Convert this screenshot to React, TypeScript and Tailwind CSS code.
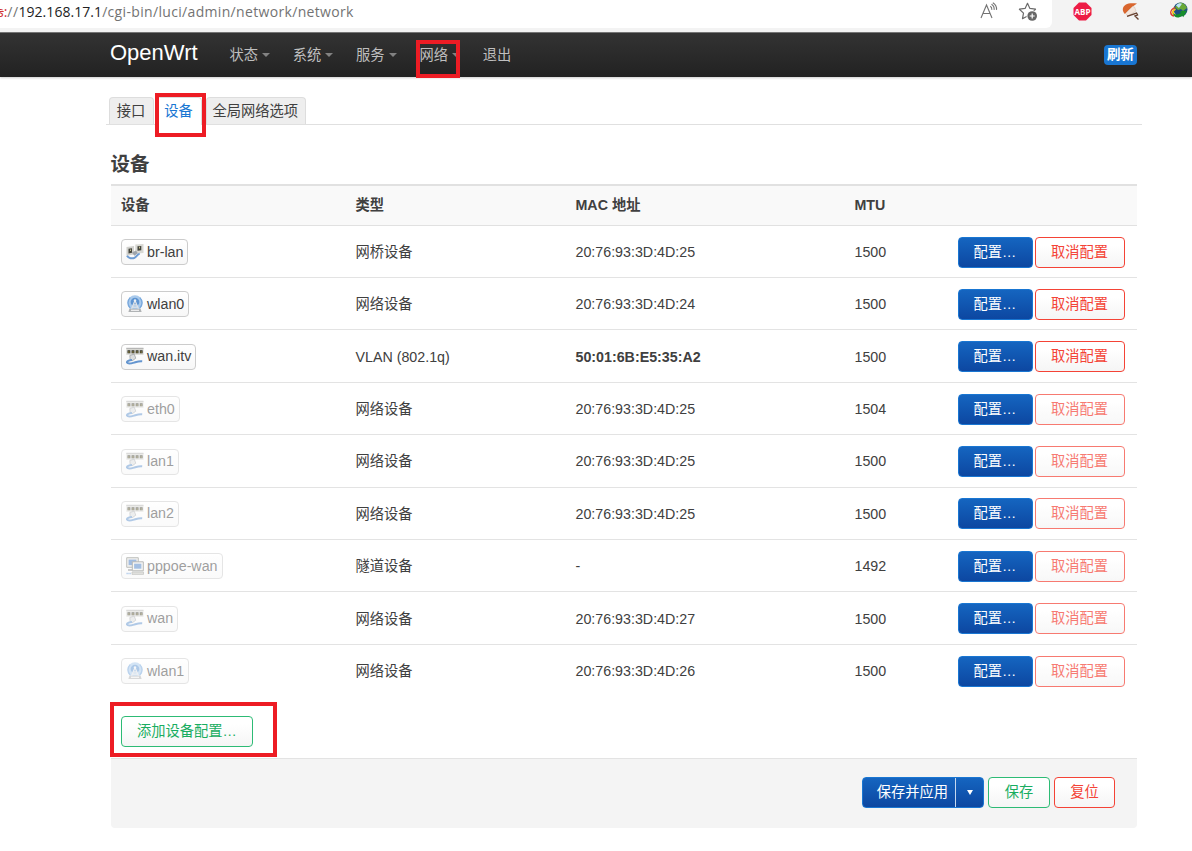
import clsx from "clsx";

type IconKind = "bridge" | "wifi" | "ethernet" | "tunnel";

type Device = {
  name: string;
  icon: IconKind;
  type: string;
  mac: string;
  mtu: number;
  active?: boolean;
  customMac?: boolean;
};

const devices: Device[] = [
  { name: "br-lan", icon: "bridge", type: "网桥设备", mac: "20:76:93:3D:4D:25", mtu: 1500, active: true },
  { name: "wlan0", icon: "wifi", type: "网络设备", mac: "20:76:93:3D:4D:24", mtu: 1500, active: true },
  { name: "wan.itv", icon: "ethernet", type: "VLAN (802.1q)", mac: "50:01:6B:E5:35:A2", mtu: 1500, active: true, customMac: true },
  { name: "eth0", icon: "ethernet", type: "网络设备", mac: "20:76:93:3D:4D:25", mtu: 1504 },
  { name: "lan1", icon: "ethernet", type: "网络设备", mac: "20:76:93:3D:4D:25", mtu: 1500 },
  { name: "lan2", icon: "ethernet", type: "网络设备", mac: "20:76:93:3D:4D:25", mtu: 1500 },
  { name: "pppoe-wan", icon: "tunnel", type: "隧道设备", mac: "-", mtu: 1492 },
  { name: "wan", icon: "ethernet", type: "网络设备", mac: "20:76:93:3D:4D:27", mtu: 1500 },
  { name: "wlan1", icon: "wifi", type: "网络设备", mac: "20:76:93:3D:4D:26", mtu: 1500 },
];

const menu = [
  { label: "状态", caret: true },
  { label: "系统", caret: true },
  { label: "服务", caret: true },
  { label: "网络", caret: true, marked: true },
  { label: "退出", caret: false },
];

const columns = "grid grid-cols-[234.5px_220px_279px_103px_1fr] pl-[10.5px]";

function Marker({ className }: { className: string }) {
  return <span className={clsx("pointer-events-none absolute z-10 border-4 border-[#ed1c24]", className)} />;
}

function DeviceIcon({ kind }: { kind: IconKind }) {
  if (kind === "bridge") {
    return (
      <svg className="size-[18px] shrink-0" viewBox="0 0 18 18">
        <path d="M.5 4 8 3v8.4L.5 12.8z" fill="#d0d0cc" />
        <path d="M9.3 1.6 17.5 1v9l-8.2.8z" fill="#d8d8d3" />
        <path d="M2.5 5.8 6 5.2v4.6l-3.5.6zM11.5 3.2l3.8-.3v4.4l-3.8.4z" fill="#45463d" />
        <path d="M4 6.5h1v1.6H4zM13 3.8h1v1.8h-1z" fill="#c5bd90" />
        <path d="M6 9.5 10 7.4l1.8 2.8-3.4 2.6z" fill="#9ea4aa" />
        <path d="M1 12.8c1.5 2.6 5.3 3.1 7.5 2 2.5-1.3 2.2-3.2 5.2-4.2" fill="none" stroke="#6d9cd4" strokeWidth="2" />
      </svg>
    );
  }
  if (kind === "wifi") {
    return (
      <svg className="size-[18px] shrink-0" viewBox="0 0 18 18">
        <circle cx="9" cy="7.8" r="7.6" fill="#a9caec" />
        <path d="M4.2 2.6a7.2 7.2 0 0 0 0 10.4M13.8 2.6a7.2 7.2 0 0 1 0 10.4" fill="none" stroke="#79a8dc" strokeWidth="1.3" />
        <circle cx="9" cy="7" r="4.3" fill="#5f95d2" />
        <path d="M9 5.5 5.5 14M9 5.5l3.5 8.5M7.2 10h3.6M6.3 12.2h5.4" fill="none" stroke="#dfe3e8" strokeWidth="1.3" />
        <circle cx="9" cy="5.5" r="1.2" fill="#eef2f5" />
        <path d="M3.4 13.7h11.2l1 3.3H2.4z" fill="#b0b3b5" />
        <path d="M5 15.3h8" stroke="#f3f3f3" strokeWidth="1.2" />
      </svg>
    );
  }
  if (kind === "tunnel") {
    return (
      <svg className="size-[18px] shrink-0" viewBox="0 0 18 18">
        <path d="M.7.7h11.6v9.6H.7z" fill="#e3e3df" stroke="#81847f" />
        <path d="M2.6 2.6h7.8v5.5H2.6z" fill="#467bc2" />
        <path d="M2 12h4v2H2z" fill="#999" />
        <path d="M6.3 4.8h11v9h-11z" fill="#eeeeeb" stroke="#70736f" />
        <path d="M8.1 6.7h7.3v5H8.1z" fill="#4b81c7" />
        <path d="M6 15h11.5v2.4H6z" fill="#c7c7c2" stroke="#858782" strokeWidth=".7" />
        <path d="M.5 16.5H5" stroke="#5790d4" strokeWidth="1.5" strokeDasharray="1.2 .7" />
      </svg>
    );
  }
  return (
    <svg className="size-[18px] shrink-0" viewBox="0 0 18 18">
      <path d="M.3 1.3h17.2v6.5H.3z" fill="#d8d8d3" />
      <path d="M.3 1.3h17.2" stroke="#aaa" />
      <path d="M1.5 3.3h2.8v3H1.5zM5.6 3.3h2.8v3H5.6zM9.7 3.3h2.8v3H9.7zM13.8 3.3h2.8v3h-2.8z" fill="#35362d" />
      <path d="M2.3 5h1.2M6.4 5h1.2M10.5 5h1.2M14.6 5h1.2" stroke="#c5b350" />
      <path d="m3.8 8.5 4.4-1.4 1.6 4.1-3.7 2.7-2-2z" fill="#dcdedf" stroke="#969b9f" strokeWidth=".7" />
      <path d="M6 13c-3 .2-5.4 1.5-5 2.6.8 1.4 4.5.7 7 0s4.5-1.6 8.2-1.3" fill="none" stroke="#6495cf" strokeWidth="2" />
    </svg>
  );
}

const buttonBase = "h-[31px] rounded border text-center leading-[29px] whitespace-nowrap";
const primary = "border-[#1976d2] bg-linear-to-b from-[#1565c0] to-[#0d47a1] text-white";
const outline = "bg-linear-to-b from-white from-25% to-[#f5f5f5]";

function BrowserBar() {
  return (
    <div className="flex h-[33px] border-b border-[#777] bg-[#f3f3f3] font-['Open_Sans',sans-serif]">
      <div className="flex h-7 w-[1052px] items-start justify-between overflow-hidden rounded-br-md bg-white pr-[14px]">
        <div className="flex text-[14px] leading-[23px] whitespace-nowrap text-[#737373]">
          <span className="-ml-[3px] text-[#d13438] line-through">s</span>
          <span className="text-[#d13438]">:</span>
          <span className="tracking-[0.4px]">//</span>
          <span className="tracking-[0.05px] text-[#222]">192.168.17.1</span>
          <span className="tracking-[0.33px]">/cgi-bin/luci/admin/network/network</span>
        </div>
        <div className="flex gap-[19px] pt-[2px]">
          <svg className="h-5 w-[19px]" viewBox="0 0 19 20" fill="none" stroke="#737373" strokeWidth="1.1">
            <path d="m1 16 5.5-13L12 16M3 11.5h7M10.3 4.2c1.2.8 1.7 2.2 1.5 3.7M11.5 2.3c2 1.2 2.9 3.3 2.6 5.6M12.8.8c2.7 1.6 4 4.1 3.7 7.1" />
          </svg>
          <svg className="size-5" viewBox="0 0 20 20">
            <path d="m9.5 1.3 2.4 5.1 5.6.8-4 3.9 1 5.4-5-2.6-5 2.8 1-5.6-4.1-3.9 5.7-.8z" fill="white" stroke="#6b6b6b" strokeWidth="1.2" strokeLinejoin="round" />
            <circle cx="14.2" cy="14" r="5.7" fill="white" />
            <circle cx="14.2" cy="14" r="4.8" fill="#666" />
            <path d="M14.2 11.5v5M11.7 14h5" stroke="white" strokeWidth="1.2" />
          </svg>
        </div>
      </div>
      <div className="flex gap-[30px] pt-[2px] pl-[21px]">
        <svg className="size-[19px]" viewBox="0 0 19 19">
          <path d="M6 .5h7L18.5 6v7L13 18.5H6L.5 13V6z" fill="#ed1c45" />
          <text x="9.5" y="12.8" textAnchor="middle" textLength="16" lengthAdjust="spacingAndGlyphs" fontSize="9" fontWeight="700" fill="white">ABP</text>
        </svg>
        <svg className="size-[18px]" viewBox="0 0 18 18">
          <path d="M.8 7.5C1 2 7 .4 15 1.5L11.5 4 7 8l-4 4C1.5 10.500.8 9 .8 7.500z" fill="#d9662e" />
          <path d="m3.500 11.500 7-7 2 .5 1.500 4-8 5z" fill="#f3e5dc" stroke="#cfb9aa" strokeWidth=".5" />
          <path d="m5 14.300 9.500-3.300 1 2-2.500 1 3.500 3.500" fill="none" stroke="#68402e" strokeWidth="1.4" />
        </svg>
        <svg className="size-[18px]" viewBox="0 0 18 18">
          <circle cx="10.5" cy="7.5" r="7" fill="#1f4f86" />
          <path d="M9 1c4-1 7 2 8 5l-4 3-2-2-3 1-3-3z" fill="#69a936" />
          <path d="M6 3.500c2-2.500 4-2.800 6-1.800L9 6z" fill="#bee4f6" />
          <path d="M5 5.5C-.5 8-.5 13 4 14" fill="none" stroke="#db3b29" strokeWidth="1.3" />
          <path d="M5.5 7C2 9 2 11.5 5 12.5" fill="none" stroke="#f2c41c" strokeWidth="1.8" />
          <path d="M3 11c2 2 5 2 8-.2L10 9l7-.2-3.8 6.4-.9-1.8C8.5 17 4 16 3 11z" fill="#188e2b" />
        </svg>
      </div>
    </div>
  );
}

function Navbar() {
  return (
    <header className="flex h-11 items-start bg-linear-to-b from-[#333] to-[#222] pr-[55px] pl-[110px] shadow-[0_1px_2px_rgba(0,0,0,0.2)]">
      <a className="w-[119.5px] pt-[6px] text-[22px] leading-[28px] text-white">OpenWrt</a>
      <nav className="flex flex-1 text-[#bfbfbf]">
        {menu.map((item) => (
          <a className="relative flex w-[63.3px] pt-[12px] leading-[21px]" key={item.label}>
            {item.label}
            {item.caret && (
              <span className="mt-[8px] ml-[4px] h-0 w-0 border-x-[4.5px] border-t-[4.5px] border-x-transparent border-t-[#828282]" />
            )}
            {item.marked && <Marker className="top-[7px] -left-[3px] h-[38px] w-[44px]" />}
          </a>
        ))}
      </nav>
      <span className="mt-3 flex h-5 w-[33px] items-center justify-center rounded bg-[#1976d2] pt-px text-[13.5px] font-bold text-white">
        刷新
      </span>
    </header>
  );
}

function DeviceRow({ device }: { device: Device }) {
  return (
    <div className={clsx(columns, "h-[52.4px] items-center border-b border-[#e3e3e3] pt-[1.5px] last:border-transparent")}>
      <div className="flex">
        <span
          className={clsx(
            "flex h-[26px] items-center gap-[3px] rounded border border-[#ccc] bg-linear-to-b from-white to-[#f7f7f7] px-1 pb-px leading-[22px]",
            !device.active && "border-[#aaa] opacity-50",
          )}
        >
          <DeviceIcon kind={device.icon} />
          {device.name}
        </span>
      </div>
      <div className="pt-px">{device.type}</div>
      <div className={clsx("pt-px", device.customMac && "font-bold")}>{device.mac}</div>
      <div className="pt-px">{device.mtu}</div>
      <div className="flex gap-[2px]">
        <button className={clsx(buttonBase, primary, "w-[75px]")} type="button">
          配置…
        </button>
        <button
          className={clsx(buttonBase, outline, "w-[90px] border-[#f44336] text-[#f44336]", !device.active && "opacity-70")}
          type="button"
        >
          取消配置
        </button>
      </div>
    </div>
  );
}

export default function App() {
  return (
    <div className="h-[851px] overflow-hidden bg-white font-['Liberation_Sans','Noto_Sans_CJK_SC',sans-serif] text-[14.25px] text-[#404040]">
      <BrowserBar />
      <Navbar />
      <main className="w-[1137px] pl-[110.5px]">
        <div className="-mr-[5px] -ml-[5px] flex h-12 items-end gap-[2px] border-b border-[#e0e0e0] pl-[3px] leading-[27px]">
          <a className="h-[27px] w-[45px] rounded-t border border-b-0 border-[#ddd] bg-[#eee] text-center">接口</a>
          <a className="relative -mb-px h-[28px] w-[46px] rounded-t border border-b-0 border-[#ddd] bg-white text-center text-[#1976d2]">
            设备
            <Marker className="-top-[5px] -left-[2px] h-11 w-[51px]" />
          </a>
          <a className="ml-[2px] h-[27px] w-[100px] rounded-t border border-b-0 border-[#ddd] bg-[#eee] pl-[6px]">全局网络选项</a>
        </div>

        <h2 className="mt-[20px] h-[39px] text-[19.5px] leading-[39px] font-bold">设备</h2>

        <section>
          <div className={clsx(columns, "h-[41.6px] items-center border-t-2 border-b border-[#e1e1e1] bg-[#f9f9f9] font-bold")}>
            <div>设备</div>
            <div>类型</div>
            <div>MAC 地址</div>
            <div>MTU</div>
          </div>
          <div>
            {devices.map((device) => (
              <DeviceRow device={device} key={device.name} />
            ))}
          </div>
        </section>

        <div className="relative h-[60.5px] pt-[19px] pl-[10.5px]">
          <button className={clsx(buttonBase, outline, "w-[132px] border-[#2dbb75] text-[#19ad61]")} type="button">
            添加设备配置…
          </button>
          <Marker className="top-[5px] -left-[1px] h-[55px] w-[167px]" />
        </div>

        <footer className="flex h-[70px] justify-end rounded-b border-t border-[#e3e3e3] bg-[#f4f4f4] pt-[18px] pr-[22px]">
          <div className={clsx(buttonBase, primary, "mr-[4px] flex w-[122px]")}>
            <span className="w-[93px] border-r border-[#c5d8ef] pl-[7px]">保存并应用</span>
            <span className="flex flex-1 items-center justify-center">
              <span className="h-0 w-0 border-x-[3px] border-t-[5px] border-x-transparent border-t-white" />
            </span>
          </div>
          <button className={clsx(buttonBase, outline, "mr-[4px] w-[62px] border-[#2dbb75] text-[#19ad61]")} type="button">
            保存
          </button>
          <button className={clsx(buttonBase, outline, "w-[61px] border-[#f44336] text-[#f44336]")} type="button">
            复位
          </button>
        </footer>
      </main>
    </div>
  );
}
